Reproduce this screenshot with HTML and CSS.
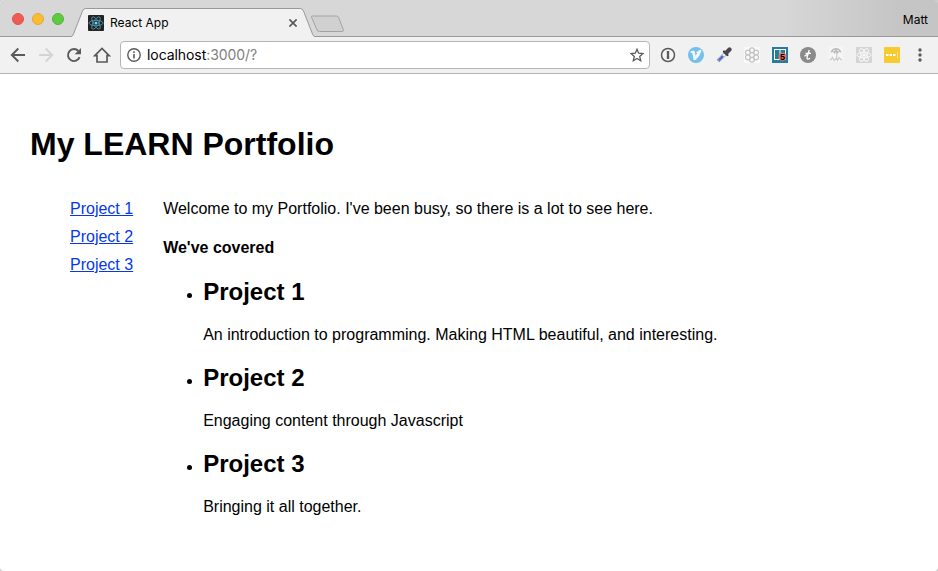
FILE: index.html
```html
<!DOCTYPE html>
<html lang="en">
<head>
<meta charset="utf-8">
<title>React App</title>
<link rel="stylesheet" href="styles.css">
</head>
<body>
<div class="window">
  <header class="tabbar">
    <div class="lights"><i class="red"></i><i class="yellow"></i><i class="green"></i></div>
    <div class="tab">
      <svg class="tab-shape" width="244" height="30" viewBox="0 0 244 30"><path d="M0 30V28.500Q1.500 28.500 2.300 26.500L11.500 3Q12.500.5 14.500.5H229.500Q231.500.5 232.500 3L241.700 26.500Q242.500 28.500 244 28.500V30Z" fill="#f1f1f1"/><path d="M0 28.500Q1.500 28.500 2.300 26.500L11.500 3Q12.500.5 14.500.5H229.500Q231.500.5 232.500 3L241.700 26.500Q242.500 28.500 244 28.500" fill="none" stroke="#999"/></svg>
      <svg class="favicon" width="16" height="16" viewBox="0 0 16 16"><rect width="16" height="16" rx="1" fill="#222"/><g fill="none" stroke="#559fb8" stroke-width=".8"><ellipse cx="8" cy="8" rx="7" ry="2.700"/><ellipse cx="8" cy="8" rx="7" ry="2.700" transform="rotate(60 8 8)"/><ellipse cx="8" cy="8" rx="7" ry="2.700" transform="rotate(120 8 8)"/></g><circle cx="8" cy="8" r="1.500" fill="#61dafb"/></svg>
      <span class="tab-title">React App</span>
      <svg class="close" width="8" height="8" viewBox="0 0 8 8"><path d="M.4.4l7.200 7.200M7.600.4L.4 7.600" stroke="#5a5a5a" stroke-width="1.700"/></svg>
    </div>
    <svg class="newtab" width="36" height="18" viewBox="0 0 36 18"><path d="M2.500 1H26.500Q28 1 28.500 2.300L33.300 14.500Q33.800 16.500 32 16.500H9.500Q7.500 16.500 7 15L1.600 2.500Q1 1 2.500 1Z" fill="#d0d0d0" stroke="#a3a3a3"/></svg>
    <span class="profile">Matt</span>
  </header>
  <nav class="toolbar">
    <svg width="16" height="16" viewBox="0 0 16 16"><path d="M15 8H2M8.300 1.500L1.800 8l6.500 6.500" fill="none" stroke="#5a5a5a" stroke-width="1.900"/></svg>
    <svg width="16" height="16" viewBox="0 0 16 16"><path d="M1 8h13M7.700 1.500L14.200 8l-6.500 6.500" fill="none" stroke="#d4d4d4" stroke-width="1.900"/></svg>
    <svg width="16" height="16" viewBox="0 0 16 16"><path d="M13.600 10.200A6 6 0 1 1 12.400 4" fill="none" stroke="#5a5a5a" stroke-width="1.900"/><path d="M15 1v6.300H8.700Z" fill="#5a5a5a"/></svg>
    <svg width="18" height="16" viewBox="0 0 18 16"><path d="M1.800 8.700L9 1.500l7.200 7.200H14V15H4V8.700Z" fill="none" stroke="#5a5a5a" stroke-width="1.700"/></svg>
    <div class="address">
      <svg width="14" height="14" viewBox="0 0 14 14"><circle cx="7" cy="7" r="6.200" fill="none" stroke="#5a5a5a" stroke-width="1.400"/><path d="M7 6v4.500M7 3.300V5" stroke="#5a5a5a" stroke-width="1.600"/></svg>
      <span class="url">localhost<span class="path">:3000/?</span></span>
      <svg class="star" width="14" height="14" viewBox="0 0 14 14"><path d="M7 1.200l1.700 4 4.300.4-3.300 2.800 1 4.300L7 10.400l-3.700 2.300 1-4.300L1 5.600l4.300-.4Z" fill="none" stroke="#5a5a5a" stroke-width="1.300"/></svg>
    </div>
    <div class="extensions">
      <svg width="16" height="16" viewBox="0 0 16 16"><circle cx="8" cy="8" r="6.500" fill="#f5f5f5" stroke="#5a5a5a" stroke-width="1.500"/><path d="M6.800 4h2.400v3.500l-.5.5.5.6V12H6.800V8.600l.5-.6-.5-.5Z" fill="#5a5a5a"/></svg>
      <svg width="16" height="16" viewBox="0 0 16 16"><circle cx="8" cy="8" r="8" fill="#75bfeb"/><path d="M2.500 4.500L5.500 3.500Q6.800 3.500 7 5.500L7.500 8.500 9.500 6H8Q9.500 3.800 12.500 2.500L13.500 4Q12 9 7.500 13H5.500L4.300 6H2.500Z" fill="#eef8fe"/></svg>
      <svg width="16" height="16" viewBox="0 0 16 16"><path d="M2 14L9.500 6.500" stroke="#8a8a8a" stroke-width="3.800"/><path d="M2.600 13.400L9 7" stroke="#e5e9fa" stroke-width="2.600"/><path d="M2.800 13.200L7 9" stroke="#4768dc" stroke-width="2.200"/><path d="M8 4.500l3.500 3.500" stroke="#383838" stroke-width="2.200" stroke-linecap="round"/><path d="M10.500 5.500L13.500 2.500" stroke="#484848" stroke-width="4.200" stroke-linecap="round"/></svg>
      <svg width="16" height="16" viewBox="0 0 16 16"><path fill="#fafafa" d="M0 0h16v16H0z"/><g fill="none" stroke="#c4c4c4" stroke-width="1.200"><circle cx="8" cy="3.300" r="2.400"/><circle cx="12.100" cy="5.600" r="2.400"/><circle cx="12.100" cy="10.400" r="2.400"/><circle cx="8" cy="12.700" r="2.400"/><circle cx="3.900" cy="10.400" r="2.400"/><circle cx="3.900" cy="5.600" r="2.400"/><circle cx="8" cy="8" r="2.300" fill="#fafafa"/></g></svg>
      <svg width="16" height="16" viewBox="0 0 16 16"><path fill="#237d9c" d="M0 0h16v16H0z"/><path d="M2 2h12v11H2z" fill="#fff"/><path d="M3 3h4.500v9H3zM8.500 3H13v9H8.500z" fill="#237d9c"/><circle cx="10.500" cy="9.800" r="4" fill="#f2706b"/><text class="badge" x="8" y="13">5</text></svg>
      <svg width="16" height="16" viewBox="0 0 16 16"><circle cx="8" cy="8" r="8" fill="#8a8a8a"/><path d="M9.200 3L7 10.500Q6.700 13.300 10 11.200M5.500 6.300H11M4.500 9.200Q7.500 8 9.500 5" fill="none" stroke="#fff" stroke-width="1.300"/></svg>
      <svg width="16" height="16" viewBox="0 0 16 16"><path fill="#f6f6f6" d="M1 0h14v15H1z"/><path d="M2.500 5.500Q3.500 1 8 1t5.500 4.500L11 5 9.500 7 8 5 6.500 7 5 5Z" fill="#bdbdbd"/><path d="M5 4l2-1M9 3l2 1" stroke="#eee"/><path d="M8 5q1.500 2 .5 5M2 13.500l2.500-3 1.500 3 2.500-2.500 1 2.500 1.500-3 3 3" fill="none" stroke="#cdcdcd" stroke-width="1.300"/></svg>
      <svg width="16" height="16" viewBox="0 0 16 16"><path fill="#d5d5d5" d="M0 0h16v16H0z"/><g fill="none" stroke="#f8f8f8"><ellipse cx="8" cy="8" rx="7" ry="2.700"/><ellipse cx="8" cy="8" rx="7" ry="2.700" transform="rotate(60 8 8)"/><ellipse cx="8" cy="8" rx="7" ry="2.700" transform="rotate(120 8 8)"/></g><circle cx="8" cy="8" r="1.500" fill="#fff"/></svg>
      <svg width="16" height="16" viewBox="0 0 16 16"><rect width="16" height="16" rx="1" fill="#f7cb2d"/><path d="M2 7h2.500v2H2zM5.500 7H8v2H5.500zM9 7h2.500v2H9z" fill="#fff"/><path d="M13.500 5v6" stroke="#fbe59a"/></svg>
      <svg width="16" height="16" viewBox="0 0 16 16"><g fill="#5a5a5a"><circle cx="8" cy="3" r="1.700"/><circle cx="8" cy="8" r="1.700"/><circle cx="8" cy="13" r="1.700"/></g></svg>
    </div>
  </nav>
  <main class="page">
    <h1>My LEARN Portfolio</h1>
    <div class="columns">
      <ul class="menu">
        <li><a href="#p1">Project 1</a></li>
        <li><a href="#p2">Project 2</a></li>
        <li><a href="#p3">Project 3</a></li>
      </ul>
      <section class="content">
        <p>Welcome to my Portfolio. I've been busy, so there is a lot to see here.</p>
        <h4>We've covered</h4>
        <ul class="projects">
          <li id="p1"><h2>Project 1</h2><p>An introduction to programming. Making HTML beautiful, and interesting.</p></li>
          <li id="p2"><h2>Project 2</h2><p>Engaging content through Javascript</p></li>
          <li id="p3"><h2>Project 3</h2><p>Bringing it all together.</p></li>
        </ul>
      </section>
    </div>
  </main>
</div>
</body>
</html>
```
FILE: styles.css
```css
* { box-sizing: border-box; }
body { margin: 0; background: #ccc; font-family: "Liberation Sans", Arial, sans-serif; color: #000; }
svg { display: block; flex: none; }
.window { height: 571px; overflow: hidden; background: #fff; border-radius: 4px; }
.tabbar { display: flex; height: 37px; background: linear-gradient(90deg, #d7d7d7 0, #d7d7d7 780px, #c5c5c5 900px, #c5c5c5); border-bottom: 1px solid #999; }
.lights { display: flex; gap: 8px; width: 71px; padding: 13px 0 0 12px; flex: none; }
.lights i { width: 12px; height: 12px; border-radius: 50%; border: 1px solid; }
.lights .red { background: #ee5c54; border-color: #e2524c; }
.lights .yellow { background: #fabc30; border-color: #e6a935; }
.lights .green { background: #5dcb3e; border-color: #53b43b; }
.tab { position: relative; display: flex; align-items: center; width: 244px; height: 29px; margin-top: 8px; padding: 1px 18px 0 17px; flex: none; }
.tab-shape { position: absolute; left: 0; top: 0; }
.favicon, .tab-title, .close { position: relative; }
.tab-title { margin-left: 6px; padding-bottom: 1px; font: 12px Inter, sans-serif; }
.close { margin-left: auto; }
.newtab { margin: 15px 0 0 -5px; }
.profile { margin: 13px 10px 0 auto; font: 12px/14px Inter, sans-serif; }
.toolbar { display: flex; align-items: center; gap: 12px; height: 37px; padding: 0 10px; background: #f1f1f1; border-bottom: 1px solid #b3b3b3; }
.toolbar > svg:nth-child(4) { margin-left: -1px; }
.address { display: flex; align-items: center; width: 530px; height: 28px; margin-left: -3px; padding: 0 5px 0 6px; flex: none; background: #fff; border: 1px solid #b5b5b5; border-radius: 4px; }
.url { margin-left: 6px; padding-bottom: 1px; font: 14px Inter, sans-serif; letter-spacing: -.07px; }
.path { color: #808080; }
.star { margin-left: auto; }
.extensions { display: flex; gap: 12px; margin-left: -2px; }
.badge { font: bold 9px "Liberation Sans", sans-serif; }
.page { padding: 0 30px; font-size: 16px; line-height: 18px; }
h1 { margin: 52px 0 37px; font-size: 32px; line-height: 37px; }
.columns { display: flex; gap: 30px; }
.menu { list-style: none; margin: 0; padding: 0 0 0 40px; flex: none; }
.menu li { margin-bottom: 10px; }
a { color: #0638e8; text-decoration: underline; }
.content p { margin: 0; }
h4 { margin: 21px 0; font-size: 16px; }
.projects { margin: 0; padding-left: 40px; }
h2 { margin: 0 0 20px; font-size: 24px; line-height: 28px; }
.projects li { margin-bottom: 20px; }
```
